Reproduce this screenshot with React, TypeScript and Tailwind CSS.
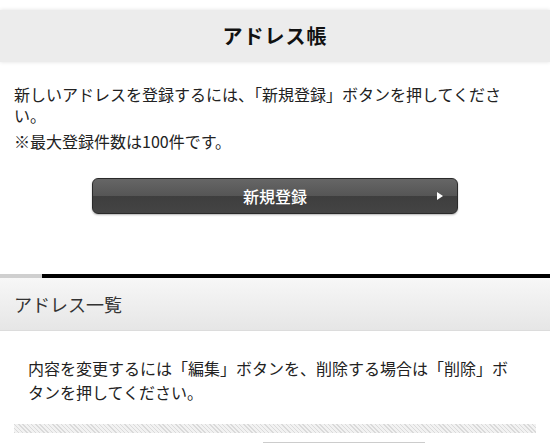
export default function App() {
  const font = { fontFamily: '"Noto Sans CJK JP", "Noto Sans", sans-serif' };

  return (
    <div className="w-[550px] h-[444px] overflow-hidden bg-white text-[#222]" style={font}>
      {/* page title */}
      <div className="pt-[10px]">
        <div className="h-[52px] bg-[#ececec] shadow-[0_0_4px_rgba(0,0,0,0.12)] flex items-center justify-center">
          <h1 className="text-[20px] font-bold text-[#111] tracking-[1px]">アドレス帳</h1>
        </div>
      </div>

      <div className="pl-[14px] pr-[40px] pt-[22px] text-[16px] leading-[21px] text-[#222]">
        <p>新しいアドレスを登録するには、「新規登録」ボタンを押してください。</p>
        <p className="mt-[5px]">※最大登録件数は100件です。</p>
      </div>

      <div className="px-[92px] pt-[26px]">
        <button className="relative w-full h-[36px] rounded-[6px] border border-[#2a2a2a] bg-[linear-gradient(#666_0%,#555_50%,#3e3e3e_51%,#444_100%)] shadow-[0_1px_2px_rgba(0,0,0,0.3)] flex items-center justify-center">
          <span className="text-white text-[16px] font-medium">新規登録</span>
          <span className="absolute right-[14px] top-1/2 -translate-y-1/2 w-0 h-0 border-y-[4px] border-y-transparent border-l-[6px] border-l-white" />
        </button>
      </div>

      {/* address list */}
      <div className="mt-[60px] flex h-[4px]">
        <div className="w-[42px] bg-[#cfcfcf]" />
        <div className="flex-1 bg-black" />
      </div>
      <div className="h-[53px] bg-[linear-gradient(#f7f7f7,#e6e6e6)] border-b border-[#dcdcdc] flex items-center pl-[14px]">
        <h2 className="text-[18px] text-[#333]">アドレス一覧</h2>
      </div>

      <div className="pl-[28px] pr-[30px] pt-[25px] text-[16px] leading-[24px] text-[#222]">
        <p>内容を変更するには「編集」ボタンを、削除する場合は「削除」ボタンを押してください。</p>
      </div>

      <div className="mx-[14px] mt-[20px] h-[9px] bg-[repeating-linear-gradient(45deg,#dadada_0px,#dadada_1px,#f2f2f2_1px,#f2f2f2_3px)]" />

      <div className="ml-[263px] mt-[9px] w-[162px] h-[20px] border-t border-[#ccc]" />
    </div>
  );
}
